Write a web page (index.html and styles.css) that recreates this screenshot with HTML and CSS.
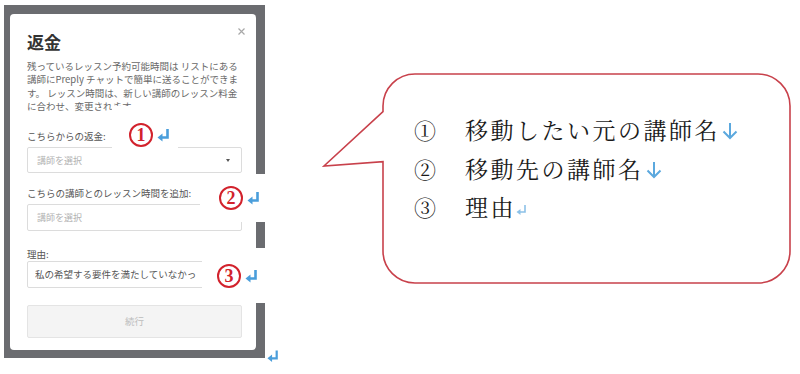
FILE: index.html
```html
<!DOCTYPE html>
<html lang="ja">
<head>
<meta charset="utf-8">
<title>返金</title>
<link rel="stylesheet" href="styles.css">
</head>
<body>
<div class="page">
  <div class="figure">
    <div class="shot">
      <div class="modal">
        <div class="modal-head">
          <h1 class="modal-title">返金</h1>
          <span class="close" aria-label="閉じる">
            <svg width="7" height="7" viewBox="0 0 7 7"><path d="M0.5 0.5 L6.5 6.5 M6.5 0.5 L0.5 6.5" stroke="#a8a8a8" stroke-width="1.2" fill="none"/></svg>
          </span>
        </div>
        <p class="modal-text">残っているレッスン予約可能時間は リストにある<br>講師にPreply チャットで簡単に送ることができま<br>す。 レッスン時間は、新しい講師のレッスン料金<br>に合わせ、変更されます</p>
        <label class="field-label gap-1">こちらからの返金:</label>
        <div class="field field-select gap-s1"><span class="placeholder">講師を選択</span><span class="caret"></span></div>
        <label class="field-label gap-2">こちらの講師とのレッスン時間を追加:</label>
        <div class="field gap-s2"><span class="placeholder">講師を選択</span></div>
        <label class="field-label gap-3">理由:</label>
        <div class="field field-reason"><span class="value">私の希望する要件を満たしていなかっ</span></div>
        <div class="btn">続行</div>
      </div>
      <div class="callout callout-1"><span class="badge">1</span><svg class="ret" width="13" height="14" viewBox="0 0 13 14"><path d="M10.5 1 V9.5 H5" stroke="#4a9edb" stroke-width="2.6" fill="none"/><path d="M0.5 9.5 L5.5 5.5 L5.5 13.5 Z" fill="#4a9edb"/></svg></div>
      <div class="callout callout-2"><span class="badge">2</span><svg class="ret" width="13" height="14" viewBox="0 0 13 14"><path d="M10.5 1 V9.5 H5" stroke="#4a9edb" stroke-width="2.6" fill="none"/><path d="M0.5 9.5 L5.5 5.5 L5.5 13.5 Z" fill="#4a9edb"/></svg></div>
      <div class="callout callout-3"><span class="badge">3</span><svg class="ret" width="13" height="14" viewBox="0 0 13 14"><path d="M10.5 1 V9.5 H5" stroke="#4a9edb" stroke-width="2.6" fill="none"/><path d="M0.5 9.5 L5.5 5.5 L5.5 13.5 Z" fill="#4a9edb"/></svg></div>
    </div>
    <svg class="pmark" width="12" height="14" viewBox="0 0 13 14"><path d="M10.5 1 V9.5 H5" stroke="#4a9edb" stroke-width="2.4" fill="none"/><path d="M0.5 9.5 L5.5 5.5 L5.5 13.5 Z" fill="#4a9edb"/></svg>
  </div>

  <div class="bubble">
    <svg class="bubble-shape" width="468" height="212" viewBox="0 0 468 212"><path d="M92 1 H435 A32 32 0 0 1 467 33 V178 A32 32 0 0 1 435 210 H92 A32 32 0 0 1 60 178 V88.7 L1 93 L60 38.7 V33 A32 32 0 0 1 92 1 Z" fill="#fff" stroke="#c8414b" stroke-width="1.6"/></svg>
    <div class="bubble-list">
      <div class="row"><span class="num">①</span><span class="txt">移動したい元の講師名</span><svg class="down" width="18" height="18" viewBox="0 0 18 18"><path d="M9 1 V16 M2.5 9.5 L9 16 L15.5 9.5" stroke="#5ba8de" stroke-width="2" fill="none"/></svg></div>
      <div class="row"><span class="num">②</span><span class="txt">移動先の講師名</span><svg class="down" width="18" height="18" viewBox="0 0 18 18"><path d="M9 1 V16 M2.5 9.5 L9 16 L15.5 9.5" stroke="#5ba8de" stroke-width="2" fill="none"/></svg></div>
      <div class="row"><span class="num">③</span><span class="txt">理由</span><svg class="ret-small" width="11" height="12" viewBox="0 0 11 12"><path d="M9 1 V8 H4" stroke="#8cc1e8" stroke-width="1.6" fill="none"/><path d="M0.5 8 L4.5 5 L4.5 11 Z" fill="#8cc1e8"/></svg></div>
    </div>
  </div>
</div>
</body>
</html>
```

FILE: styles.css
```css
* { box-sizing: border-box; }

html, body {
  margin: 0;
  padding: 0;
  background: #ffffff;
}

body {
  width: 800px;
  height: 374px;
  overflow: hidden;
  font-family: "Noto Sans CJK JP", "Noto Sans", sans-serif;
}

.page {
  display: flex;
  align-items: flex-start;
  padding: 5px 0 0 4px;
}

.figure {
  display: flex;
  align-items: flex-end;
}

.shot {
  position: relative;
  width: 261px;
  background: #6b6c70;
  padding: 9px 9px 8px 6px;
}

.modal {
  background: #ffffff;
  border-radius: 4px;
  padding: 17px 14px 12px 17px;
  display: flex;
  flex-direction: column;
}

.modal-head {
  display: flex;
  justify-content: space-between;
  align-items: flex-start;
}

.modal-title {
  margin: 0;
  font-size: 17px;
  line-height: 22px;
  font-weight: 700;
  color: #333333;
}

.close {
  display: block;
  width: 7px;
  height: 7px;
  margin-top: -3px;
  margin-right: -3px;
}
.close svg { display: block; }

.modal-text {
  margin: 7px 0 0 0;
  font-size: 9.5px;
  line-height: 13.3px;
  color: #686868;
  white-space: nowrap;
}

.field-label {
  display: block;
  font-size: 9.5px;
  line-height: 13px;
  color: #555555;
  white-space: nowrap;
}
.gap-1 { margin-top: 17px; }
.gap-2 { margin-top: 14px; }
.gap-3 { margin-top: 17px; }
.gap-s1 { margin-top: 4px; }
.gap-s2 { margin-top: 3.5px; }

.field {
  height: 27px;
  border: 1px solid #dcdcdc;
  border-radius: 2px;
  display: flex;
  align-items: center;
  justify-content: space-between;
  padding: 0 11px 0 9px;
  overflow: hidden;
  white-space: nowrap;
}
.field-select { height: 26px; }
.field-reason { padding-left: 7px; }

.placeholder {
  font-size: 9px;
  color: #b2b2b2;
}

.value {
  display: block;
  max-width: 167px;
  overflow: hidden;
  font-size: 9.5px;
  color: #555555;
}

.caret {
  width: 0;
  height: 0;
  border-left: 2.5px solid transparent;
  border-right: 2.5px solid transparent;
  border-top: 3.5px solid #555555;
}

.btn {
  margin-top: 17px;
  height: 33px;
  border: 1px solid #e4e4e4;
  background: #f4f4f4;
  border-radius: 2px;
  display: flex;
  align-items: center;
  justify-content: center;
  font-size: 9.5px;
  color: #bcbcbc;
}

/* white annotation boxes pasted over the screenshot */
.callout {
  position: absolute;
  background: #ffffff;
  display: flex;
  align-items: flex-start;
  gap: 4px;
}
.callout-1 { left: 108px; top: 101px; width: 66px; height: 44px; padding: 17px 0 0 17px; }
.callout-2 { left: 196px; top: 169px; width: 76px; height: 48px; padding: 12px 0 0 19px; }
.callout-3 { left: 198px; top: 243px; width: 76px; height: 55px; padding: 16px 0 0 15px; }

.badge {
  width: 24px;
  height: 24px;
  border: 2.2px solid #d2222c;
  border-radius: 50%;
  color: #d2222c;
  font-family: "Liberation Serif", serif;
  font-weight: 700;
  font-size: 18px;
  line-height: 20px;
  text-align: center;
}

.ret { margin-top: 5px; }

.pmark {
  display: block;
  margin-left: 2px;
  margin-bottom: -5px;
}

/* speech bubble */
.bubble {
  position: relative;
  width: 468px;
  height: 212px;
  margin-left: 44px;
  margin-top: 68px;
}

.bubble-shape {
  position: absolute;
  left: 0;
  top: 0;
  overflow: visible;
}

.bubble-list {
  position: relative;
  padding: 38px 0 0 91px;
  font-family: "Noto Serif CJK JP", "Noto Sans CJK JP", serif;
  color: #1a1a1a;
}

.row {
  display: flex;
  align-items: center;
  height: 38.5px;
}

.num {
  width: 51px;
  font-size: 22px;
  line-height: 38.5px;
}

.txt {
  font-size: 23px;
  line-height: 38.5px;
  letter-spacing: 2.5px;
}

.down { margin-left: 1px; margin-top: 2px; }
.ret-small { margin-left: 0; margin-top: 6px; }
```
